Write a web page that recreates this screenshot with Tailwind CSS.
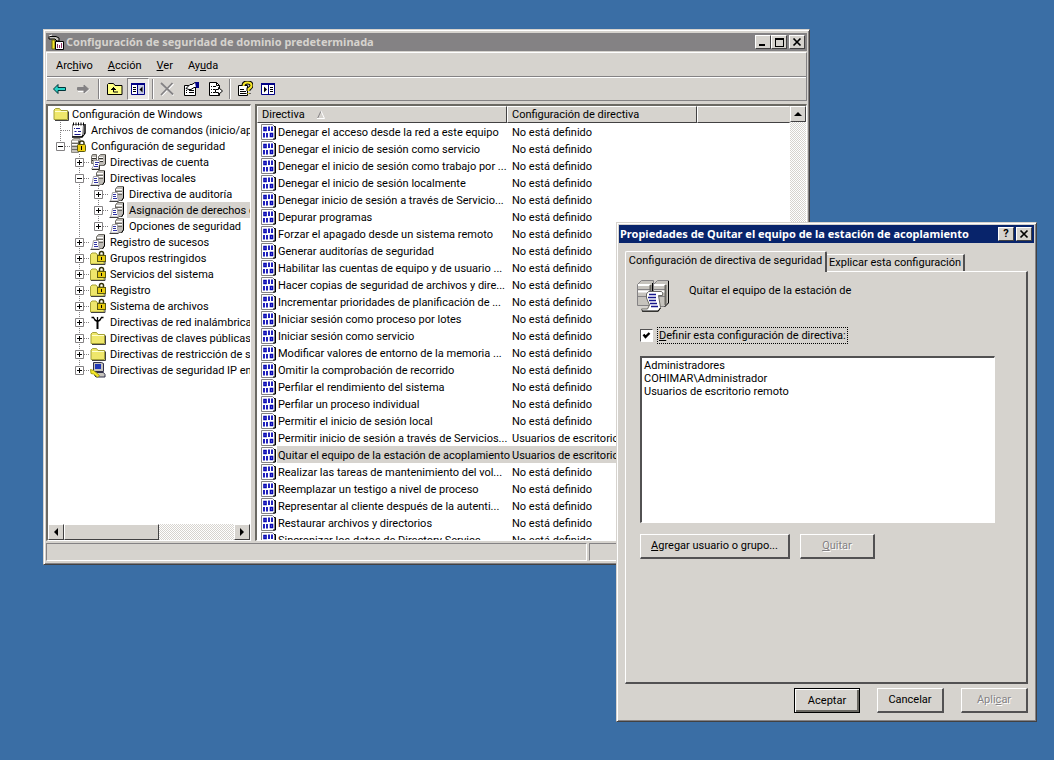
<!DOCTYPE html>
<html lang="es">
<head>
  <meta charset="UTF-8">
  <meta name="viewport" content="width=device-width, initial-scale=1.0">
  <title>Configuración de seguridad de dominio predeterminada</title>
  <script src="https://cdn.jsdelivr.net/npm/@tailwindcss/browser@4"></script>
</head>
<body class="relative min-h-screen overflow-hidden bg-[#3a6ea5] font-['Roboto','Liberation_Sans',sans-serif] text-[11px] leading-4 text-black">

  <!-- Icons -->
  <svg class="hidden">
    <symbol id="i-folder" viewBox="0 0 16 16">
      <path d="M1 13.500V4l1.500-1.500h4L8 4.500h6.500v9z" fill="#efe76b" stroke="#a5a239"/>
      <path d="M2 5.500h12" stroke="#ffffce"/><path d="M2 14.500h13.500V5.500" fill="none" stroke="#424142"/>
    </symbol>
    <symbol id="i-folderlock" viewBox="0 0 16 16">
      <path d="M.5 14V4.500L2 3h4l1.500 2H14v9z" fill="#efe76b" stroke="#a5a239"/>
      <path d="M1 14.500h14V8" fill="none" stroke="#424142"/>
      <path d="M9.500 6V3.500q0-2 2-2t2 2V6" fill="none" stroke="#31300a" stroke-width="1.500"/>
      <rect x="7.500" y="5.500" width="8" height="6" fill="#e7cb10" stroke="#5a5910"/><path d="M11.500 7v3" stroke="#000"/>
    </symbol>
    <symbol id="i-script" viewBox="0 0 16 16">
      <path d="M1.500 2.500h11l-1 12h-10z" fill="#fff" stroke="#848284"/>
      <path d="M14 2v9l-3 4H1" fill="none" stroke="#000" stroke-width="1.500"/><path d="M12.500 3v10" stroke="#848284"/>
      <path d="M2.500.500v3M5 .500v3M7.500.500v3M10 .500v3M12.500.500v3" stroke="#000"/>
      <path d="M5 6.500h4M3 6.500h1M3.500 9.500h2M7 9.500h3M3.500 12.500h6" stroke="#18188c"/>
    </symbol>
    <symbol id="i-serverlock" viewBox="0 0 16 16">
      <path d="M.5 2.500L3 .500h6v12L7 14.500H.500z" fill="#c6c3bd" stroke="#8c8a84"/>
      <path d="M1 5.500h6M1 8.500h6M1 11.500h6M7.500 2.500v12" stroke="#6b6963"/><path d="M1 3.500h6M1 6.500h6" stroke="#fff"/>
      <path d="M8.500 7V5q0-2 2.300-2T13 5v2" fill="none" stroke="#31300a" stroke-width="1.500"/>
      <rect x="6.500" y="6.500" width="8" height="7" rx="1" fill="#efcf10" stroke="#5a5910"/><path d="M10.500 8v4" stroke="#000"/>
    </symbol>
    <symbol id="i-servers" viewBox="0 0 16 16">
      <path d="M1.500 2.500l1-2h4v9h-5zM8.500 2.500l2-2h5v9l-2 2h-5z" fill="#bdbab5" stroke="#6b6963"/>
      <path d="M2 4.500h4M2 6.500h4M9 4.500h4M9 7.500h4M15.500 1v9l-2 2" fill="none" stroke="#31302c"/><path d="M2 3.500h4M9 3.500h4M9 6.500h4" stroke="#fff"/>
      <path d="M3.500 6.500h6v4l-1 4.500h-7l2-3z" fill="#fff" stroke="#a5a2a5"/><path d="M2 15.500h7.500V11" fill="none" stroke="#31302c"/>
      <path d="M5 8.500h4M5 10.500h3M4 12.500h4" stroke="#3134a5"/>
    </symbol>
    <symbol id="i-policy" viewBox="0 0 16 16">
      <path d="M6.500 3L8.500.500h6v11l-2 3h-6z" fill="#bdbab5" stroke="#6b6963"/>
      <path d="M7 5.500h6M7 8.500h6" stroke="#6b6963"/><path d="M7 3.500h6M7 6.500h6" stroke="#fff"/><path d="M14.500 1v11l-2 3" fill="none" stroke="#000"/>
      <path d="M3.500 6.500h5v4l1 4.500h-8l1-3z" fill="#fff" stroke="#a5a2a5"/><path d="M.5 15.500h9" stroke="#424142"/>
      <path d="M4 8.500h3M4 10.500h3M4 12.500h4" stroke="#3134a5"/>
    </symbol>
    <symbol id="i-antenna" viewBox="0 0 16 16">
      <path d="M7.500 6v9" stroke="#000" stroke-width="2"/>
      <path d="M1.500 3.500h2q1 3 4 4q3-1 4-4h2M7.500 3v5" fill="none" stroke="#000" stroke-width="1.300"/>
    </symbol>
    <symbol id="i-ipsec" viewBox="0 0 16 16">
      <path d="M3.500.500h8l2 1v8h-10z" fill="#c6c3bd" stroke="#31304a"/><rect x="5" y="2" width="6" height="5" fill="#2138b5"/>
      <path d="M4.500 13.500l2-3h7l1.500 2v2.500H6z" fill="#c6c3bd" stroke="#31304a"/>
      <path d="M.5 7.500l3 1 6 5-2 1.500-4-3-2.500-.5z" fill="#f7e729" stroke="#a5a210"/>
    </symbol>
    <symbol id="i-binary" viewBox="0 0 16 16">
      <path d="M.5.500h11l2 2v13h-13z" fill="#fff" stroke="#848284"/>
      <path d="M13 2.500h1.500V15H12" fill="none" stroke="#000"/>
      <path d="M3 3.500h2v3H3z" fill="none" stroke="#0808b5" stroke-width="1.600"/><path d="M8 2.500V7M11 2.500V7" stroke="#0808b5" stroke-width="1.800"/>
      <path d="M9.500 9.500h2v3h-2z" fill="none" stroke="#0808b5" stroke-width="1.600"/><path d="M3 9v4.500M6 9v4.500" stroke="#0808b5" stroke-width="1.800"/>
    </symbol>
    <symbol id="i-console" viewBox="0 0 16 16">
      <path d="M1 2.500h7l3 1.500v3H9L7 5H1z" fill="#c6c3bd" stroke="#000"/><path d="M1 2l3-1" stroke="#fff"/>
      <path d="M4 6h3v9H4z" fill="#f7e729" stroke="#6b6910"/>
      <path d="M7.500 7.500h8v8h-8z" fill="#fff" stroke="#000"/><path d="M9.500 14v-4M11.500 14v-3M13.500 14V9" stroke="#8c3063"/>
    </symbol>
    <symbol id="i-back" viewBox="0 0 16 16"><path d="M1.500 8L6 3.500v3h7.500v3H6v3z" fill="#29d3c6" stroke="#003439"/></symbol>
    <symbol id="i-fwd" viewBox="0 0 16 16"><path d="M3 10.500h6M10 12.500l4.500-4.500" stroke="#fff"/><path d="M13.500 8L9 4v2.500H2.500v2.500H9V12z" fill="#848284" stroke="#848284"/></symbol>
    <symbol id="i-up" viewBox="0 0 16 16">
      <path d="M.5 13.500v-10l1-1h5l1.500 2h7v9z" fill="#ffff84" stroke="#000"/>
      <path d="M6.500 6v5h4.500" fill="none" stroke="#000"/><path d="M4 8.500h5M5 7.500h3M6.500 6v1" stroke="#000"/>
    </symbol>
    <symbol id="i-pane" viewBox="0 0 16 16">
      <path d="M1.500 2.500h13v11h-13z" fill="#fff" stroke="#000084"/><path d="M1 3h14" stroke="#000084" stroke-width="2"/>
      <path d="M8 4h6v9H8z" fill="#c6cbe7"/><path d="M7.500 3v10" stroke="#000084"/><path d="M3 6.500h3M3 8.500h3M3 10.500h3" stroke="#000"/><path d="M12.500 5.500v6l-3-3z"/>
    </symbol>
    <symbol id="i-pane2" viewBox="0 0 16 16">
      <path d="M1.500 2.500h13v11h-13z" fill="#fff" stroke="#000084"/><path d="M1 3h14" stroke="#000084" stroke-width="2"/>
      <path d="M8.500 3v10" stroke="#000084"/><path d="M10 6.500h3M10 8.500h3M10 10.500h3" stroke="#000"/><path d="M4 5.500v6l3-3z"/>
    </symbol>
    <symbol id="i-delete" viewBox="0 0 16 16"><path d="M2.500 3l12 11.500M14.500 3L3 14.500" stroke="#fff" stroke-width="1.500"/><path d="M2 2l12 11.500M13.500 2L2 14" stroke="#848284" stroke-width="1.800"/></symbol>
    <symbol id="i-props" viewBox="0 0 16 16">
      <path d="M1.500 4.500h11v10h-11z" fill="#fff" stroke="#000"/><path d="M3 9.500h1M6 9.500h5M3 11.500h1M6 11.500h5" stroke="#000"/>
      <path d="M3 7.500l4-4h2l3-2h2v5h-3L8 8.500H6z" fill="#fff" stroke="#000"/><path d="M12 1h4v6h-3z" fill="#000084"/>
    </symbol>
    <symbol id="i-export" viewBox="0 0 16 16">
      <path d="M2.500 1.500h7l3 3v10h-10z" fill="#fff" stroke="#000"/><path d="M9.500 1.500v3h3" fill="none" stroke="#000"/>
      <path d="M4 5.500h1M6 5.500h3M4 8.500h1M6 8.500h2M4 11.500h1M6 11.500h2" stroke="#000"/>
      <path d="M8.500 8.500h3v-2l4 3.500-4 3.500v-2h-3z" fill="#fff" stroke="#000"/>
    </symbol>
    <symbol id="i-help" viewBox="0 0 16 16">
      <path d="M1.500 4.500h9v10h-9z" fill="#fff" stroke="#000"/><path d="M3 8.500h4M3 10.500h6M3 12.500h6" stroke="#000"/>
      <path d="M6.500 5q0-3.500 4-3.500t4 3q0 2-3 3.500v2M11.500 12v1" fill="none" stroke="#000" stroke-width="4"/>
      <path d="M6.500 5q0-3.500 4-3.500t4 3q0 2-3 3.500v2M11.500 12v1" fill="none" stroke="#f7e729" stroke-width="2"/>
    </symbol>
    <symbol id="i-arrow-l" viewBox="0 0 8 8"><path d="M6 0v8L2 4z"/></symbol>
    <symbol id="i-arrow-r" viewBox="0 0 8 8"><path d="M2 0v8l4-4z"/></symbol>
    <symbol id="i-arrow-u" viewBox="0 0 8 8"><path d="M0 6h8L4 2z"/></symbol>
    <symbol id="i-close" viewBox="0 0 10 10"><path d="M1.500 1.500l7 7M8.500 1.500l-7 7" stroke="#000" stroke-width="1.700"/></symbol>
    <symbol id="i-bigpolicy" viewBox="0 0 32 32">
      <path d="M.5 4.500l4-4h12v21l-3 4H.500z" fill="#c6c3bd" stroke="#848284"/>
      <path d="M16.500 4.500l4-4h11v22l-4 4h-11z" fill="#c6c3bd" stroke="#848284"/>
      <path d="M1 5h12M17 5h11M1 11.500h12M17 11.500h11" stroke="#fff" stroke-width="2"/>
      <path d="M1 9.500h12M17 9.500h11M1 16.500h10M22 16.500h6" stroke="#848284"/>
      <path d="M15.500 3v10M31.500 1v22l-4 4" fill="none" stroke="#000"/><path d="M28.500 5v20M13.500 5v7" stroke="#6b6963" stroke-width="2"/>
      <path d="M11.500 11.500h13q2 1 1 4h-4l2 12-2 4H5.500l-1-2.500h6l2-4-3-7q-1-5 2-6.500z" fill="#fff" stroke="#6b6963"/>
      <path d="M12 14.500h7M11 17.500h8M12 20.500h7M13 23.500h7M14 26.500h7" stroke="#18188c" stroke-width="1.500"/>
      <path d="M5 31h16l2.500-3" fill="none" stroke="#000"/>
    </symbol>
  </svg>

  <!-- MMC console window -->
  <main class="absolute left-[43px] top-[29px] flex h-[536px] w-[767px] flex-col border border-[#d6d3ce] border-r-[#424142] border-b-[#424142] bg-[#d6d3ce] px-[2px] py-[3px] shadow-[inset_1px_1px_0_#fff,inset_-1px_-1px_0_#848284]">
    <header class="flex h-[18px] shrink-0 items-center gap-[2px] bg-[#848284] px-[2px]">
      <svg class="size-4"><use href="#i-console"/></svg>
      <h1 class="flex-1 truncate font-['Noto_Sans',sans-serif] font-bold text-[#d6d3ce]">Configuración de seguridad de dominio predeterminada</h1>
      <div class="flex">
        <button aria-label="Minimizar" class="flex h-[14px] w-4 items-end justify-start border border-white border-r-[#424142] border-b-[#424142] bg-[#d6d3ce] px-[3px] pb-[2px]"><span class="h-[2px] w-[6px] bg-black"></span></button>
        <button aria-label="Maximizar" class="flex h-[14px] w-4 items-center justify-center border border-white border-r-[#424142] border-b-[#424142] bg-[#d6d3ce]"><span class="h-[9px] w-[9px] border border-t-2 border-black"></span></button>
        <button aria-label="Cerrar" class="ml-[2px] flex h-[14px] w-4 items-center justify-center border border-white border-r-[#424142] border-b-[#424142] bg-[#d6d3ce]"><svg class="size-[10px]"><use href="#i-close"/></svg></button>
      </div>
    </header>

    <div class="mt-px shrink-0 border border-[#848284] border-t-white border-l-white">
      <nav class="flex h-6 items-center gap-[15px] border-b border-[#848284] pt-[2px] pl-[9px]">
        <a href="#">Arc<u>h</u>ivo</a>
        <a href="#"><u>A</u>cción</a>
        <a href="#"><u>V</u>er</a>
        <a href="#">Ay<u>u</u>da</a>
      </nav>
      <div class="flex h-[23px] items-center border-t border-white pl-[5px]">
        <button aria-label="Atrás" class="mr-[7px]"><svg class="size-4"><use href="#i-back"/></svg></button>
        <button aria-label="Adelante" class="mr-[7px]"><svg class="size-4"><use href="#i-fwd"/></svg></button>
        <span class="mr-[7px] h-5 w-[2px] border-l border-[#848284] bg-white"></span>
        <button aria-label="Subir un nivel" class="mr-1"><svg class="size-4"><use href="#i-up"/></svg></button>
        <button aria-label="Mostrar árbol" class="mr-[3px] flex size-[22px] items-center justify-center border border-[#848284] border-r-white border-b-white bg-[#ebe9e6]"><svg class="size-4"><use href="#i-pane"/></svg></button>
        <span class="mr-[5px] h-5 w-[2px] border-l border-[#848284] bg-white"></span>
        <button aria-label="Eliminar" class="mr-2"><svg class="size-4"><use href="#i-delete"/></svg></button>
        <button aria-label="Propiedades" class="mr-2"><svg class="size-4"><use href="#i-props"/></svg></button>
        <button aria-label="Exportar lista" class="mr-[6px]"><svg class="size-4"><use href="#i-export"/></svg></button>
        <span class="mr-[6px] h-5 w-[2px] border-l border-[#848284] bg-white"></span>
        <button aria-label="Ayuda" class="mr-[7px]"><svg class="size-4"><use href="#i-help"/></svg></button>
        <button aria-label="Panel de acciones"><svg class="size-4"><use href="#i-pane2"/></svg></button>
      </div>
    </div>

    <div class="mt-[3px] flex min-h-0 flex-1">
      <!-- Console tree -->
      <section class="flex w-[205px] shrink-0 flex-col border-t-2 border-r border-b border-l-2 border-[#6b6963] border-r-white border-b-white bg-white">
        <ul id="tree" class="min-h-0 flex-1 overflow-hidden"></ul>
        <div class="flex h-4 bg-[repeating-conic-gradient(#fff_0_25%,#d6d3ce_0_50%)] bg-[length:2px_2px]">
          <button aria-label="Izquierda" class="flex w-4 items-center justify-center border border-white border-r-[#424142] border-b-[#424142] bg-[#d6d3ce]"><svg class="size-2"><use href="#i-arrow-l"/></svg></button>
          <span class="w-[95px] border border-white border-r-[#424142] border-b-[#424142] bg-[#d6d3ce]"></span>
          <button aria-label="Derecha" class="ml-auto flex w-4 items-center justify-center border border-white border-r-[#424142] border-b-[#424142] bg-[#d6d3ce]"><svg class="size-2"><use href="#i-arrow-r"/></svg></button>
        </div>
      </section>

      <!-- Policy list -->
      <section class="ml-1 flex min-w-0 flex-1 border-t-2 border-r border-b border-l-2 border-[#6b6963] border-r-white border-b-white bg-white">
        <div class="min-w-0 flex-1 overflow-hidden">
          <table class="w-full table-fixed border-separate border-spacing-0">
            <colgroup><col class="w-[250px]"><col class="w-[190px]"><col></colgroup>
            <thead class="text-left">
              <tr class="h-[17px]">
                <th class="border border-white border-r-[#424142] border-b-[#424142] bg-[#d6d3ce] p-0 pl-1 font-normal leading-[15px]">
                  <span class="flex items-center gap-3">Directiva <svg class="size-2" viewBox="0 0 8 8"><path d="M.5 7.500L4 0" stroke="#848284"/><path d="M4 0l3.500 7.500H0" fill="none" stroke="#fff"/></svg></span>
                </th>
                <th class="border border-white border-r-[#424142] border-b-[#424142] bg-[#d6d3ce] p-0 pl-1 font-normal leading-[15px]">Configuración de directiva</th>
                <th class="border border-white border-r-[#d6d3ce] border-b-[#424142] bg-[#d6d3ce] p-0 leading-[15px]"></th>
              </tr>
            </thead>
            <tbody id="policies"></tbody>
          </table>
        </div>
        <div class="w-4 bg-[repeating-conic-gradient(#fff_0_25%,#d6d3ce_0_50%)] bg-[length:2px_2px]">
          <button aria-label="Arriba" class="flex h-4 w-4 items-center justify-center border border-white border-r-[#424142] border-b-[#424142] bg-[#d6d3ce]"><svg class="size-2"><use href="#i-arrow-u"/></svg></button>
        </div>
      </section>
    </div>

    <footer class="mt-[2px] flex h-[18px] shrink-0 gap-[2px]">
      <div class="w-[541px] border border-[#848284] border-r-white border-b-white"></div>
      <div class="flex-1 border border-[#848284] border-r-white border-b-white"></div>
    </footer>
  </main>

  <!-- Properties dialog -->
  <div role="dialog" class="absolute left-[616px] top-[222px] flex w-[421px] flex-col border border-[#d6d3ce] border-r-[#424142] border-b-[#424142] bg-[#d6d3ce] p-[2px] shadow-[inset_1px_1px_0_#fff,inset_-1px_-1px_0_#848284]">
    <header class="flex h-[18px] items-center gap-[2px] bg-[#08246b] pr-[2px] pl-px">
      <h2 class="flex-1 truncate font-['Noto_Sans',sans-serif] font-bold text-white">Propiedades de Quitar el equipo de la estación de acoplamiento</h2>
      <button aria-label="Ayuda" class="flex h-[14px] w-4 items-center justify-center border border-white border-r-[#424142] border-b-[#424142] bg-[#d6d3ce] font-bold leading-3">?</button>
      <button aria-label="Cerrar" class="flex h-[14px] w-4 items-center justify-center border border-white border-r-[#424142] border-b-[#424142] bg-[#d6d3ce]"><svg class="size-[10px]"><use href="#i-close"/></svg></button>
    </header>

    <div class="px-[6px] pt-2">
      <div role="tablist" class="flex items-end">
        <button role="tab" aria-selected="true" class="relative -mb-px h-[21px] w-[202px] rounded-t-[2px] border-t border-r-2 border-l border-white border-r-[#525152] bg-[#d6d3ce] pb-[2px] text-center leading-4">Configuración de directiva de seguridad</button>
        <button role="tab" class="h-[17px] w-[138px] border-t border-r-2 border-white border-r-[#525152] text-center leading-4">Explicar esta configuración</button>
      </div>
      <div class="h-[413px] border border-r-2 border-b-2 border-white border-r-[#525152] border-b-[#525152] px-[11px] pt-2">
        <div class="flex gap-5">
          <svg class="size-8"><use href="#i-bigpolicy"/></svg>
          <p class="pt-[3px]">Quitar el equipo de la estación de</p>
        </div>
        <div class="mt-[15px] ml-[3px] flex items-center gap-1">
          <span class="relative flex">
            <input id="definir" type="checkbox" checked class="peer size-[13px] appearance-none border border-[#525152] border-r-white border-b-white bg-white">
            <svg class="pointer-events-none absolute inset-0 hidden size-[13px] peer-checked:block" viewBox="0 0 13 13"><path d="M3.500 5.500l2 2.500 4-4" fill="none" stroke="#000" stroke-width="2.400"/></svg>
          </span>
          <label for="definir" class="border border-dotted border-black px-px leading-[15px]"><u>D</u>efinir esta configuración de directiva:</label>
        </div>
        <select multiple aria-label="Usuarios y grupos" class="mt-3 ml-[3px] block h-[167px] w-[355px] appearance-none overflow-hidden border-t-2 border-r border-b border-l-2 border-[#525152] border-r-white border-b-white bg-white py-px">
          <option class="h-[13px] min-h-0 px-[2px] py-0 leading-[13px]">Administradores</option>
          <option class="h-[13px] min-h-0 px-[2px] py-0 leading-[13px]">COHIMAR\Administrador</option>
          <option class="h-[13px] min-h-0 px-[2px] py-0 leading-[13px]">Usuarios de escritorio remoto</option>
        </select>
        <div class="mt-[11px] ml-[3px] flex gap-[10px]">
          <button class="h-[25px] w-[150px] border border-r-2 border-b-2 border-white border-r-[#525152] border-b-[#525152]"><u>A</u>gregar usuario o grupo...</button>
          <button disabled class="h-[25px] w-[75px] border border-r-2 border-b-2 border-white border-r-[#525152] border-b-[#525152] text-[#848284] text-shadow-[1px_1px_0_#fff]"><u>Q</u>uitar</button>
        </div>
      </div>
      <div class="flex justify-end gap-[17px] pt-1 pb-[6px]">
        <button class="h-[25px] w-[66px] border border-black shadow-[inset_1px_1px_0_#fff,inset_-2px_-2px_0_#6b6963]">Aceptar</button>
        <button class="h-[25px] w-[67px] border border-r-2 border-b-2 border-white border-r-[#525152] border-b-[#525152]">Cancelar</button>
        <button disabled class="h-[25px] w-[67px] border border-r-2 border-b-2 border-white border-r-[#525152] border-b-[#525152] text-[#848284] text-shadow-[1px_1px_0_#fff]">Apli<u>c</u>ar</button>
      </div>
    </div>
  </div>

  <script>
    // level, state (+, -, or none), icon, label
    const nodes = [
      [1, '', 'i-script', 'Archivos de comandos (inicio/apagado)'],
      [1, '-', 'i-serverlock', 'Configuración de seguridad'],
      [2, '+', 'i-servers', 'Directivas de cuenta'],
      [2, '-', 'i-policy', 'Directivas locales'],
      [3, '+', 'i-policy', 'Directiva de auditoría'],
      [3, '+', 'i-policy', 'Asignación de derechos de usuario'],
      [3, '+', 'i-policy', 'Opciones de seguridad'],
      [2, '+', 'i-policy', 'Registro de sucesos'],
      [2, '+', 'i-folderlock', 'Grupos restringidos'],
      [2, '+', 'i-folderlock', 'Servicios del sistema'],
      [2, '+', 'i-folderlock', 'Registro'],
      [2, '+', 'i-folderlock', 'Sistema de archivos'],
      [2, '+', 'i-antenna', 'Directivas de red inalámbrica (IEEE 802.11)'],
      [2, '+', 'i-folder', 'Directivas de claves públicas'],
      [2, '+', 'i-folder', 'Directivas de restricción de software'],
      [2, '+', 'i-ipsec', 'Directivas de seguridad IP en Active Directory']
    ];

    // is there another node at this level further down the same branch
    function hasNext(index, level) {
      for (let i = index + 1; i < nodes.length; i++) {
        if (nodes[i][0] < level) return false;
        if (nodes[i][0] === level) return true;
      }
      return false;
    }

    const dots = 'stroke="#848284" stroke-dasharray="1 1"';
    let html = `<li class="flex h-4 items-center pl-[5px] whitespace-nowrap"><svg class="size-4 shrink-0"><use href="#i-folder"/></svg><span class="ml-px px-[2px] pt-[2px] leading-[14px]">Configuración de Windows</span></li>`;
    nodes.forEach(([level, state, icon, label], i) => {
      html += `<li class="flex h-4 items-center pl-2 whitespace-nowrap">`;
      for (let l = 1; l < level; l++) {
        html += `<svg class="h-4 w-[19px] shrink-0">${hasNext(i, l) ? `<path d="M4.5 0v16" ${dots}/>` : ''}</svg>`;
      }
      html += `<svg class="h-4 w-[15px] shrink-0" fill="none"><path d="M4.5 0v${hasNext(i, level) ? 16 : 8}M5 8.5h10" ${dots}/>`;
      if (state) html += `<path d="M.5 4.5h8v8h-8z" fill="#fff" stroke="#848284"/><path d="M2 8.5h5${state === '+' ? 'M4.5 6v5' : ''}" stroke="#000"/>`;
      const selected = label.startsWith('Asignación') ? 'bg-[#d6d3ce]' : '';
      html += `</svg><svg class="size-4 shrink-0"><use href="#${icon}"/></svg><span class="ml-[2px] px-[2px] pt-[2px] leading-[14px] ${selected}">${label}</span></li>`;
    });
    document.getElementById('tree').innerHTML = html;

    const undefinedText = 'No está definido';
    const policies = [
      ['Denegar el acceso desde la red a este equipo', undefinedText],
      ['Denegar el inicio de sesión como servicio', undefinedText],
      ['Denegar el inicio de sesión como trabajo por ...', undefinedText],
      ['Denegar el inicio de sesión localmente', undefinedText],
      ['Denegar inicio de sesión a través de Servicio...', undefinedText],
      ['Depurar programas', undefinedText],
      ['Forzar el apagado desde un sistema remoto', undefinedText],
      ['Generar auditorías de seguridad', undefinedText],
      ['Habilitar las cuentas de equipo y de usuario ...', undefinedText],
      ['Hacer copias de seguridad de archivos y dire...', undefinedText],
      ['Incrementar prioridades de planificación de ...', undefinedText],
      ['Iniciar sesión como proceso por lotes', undefinedText],
      ['Iniciar sesión como servicio', undefinedText],
      ['Modificar valores de entorno de la memoria ...', undefinedText],
      ['Omitir la comprobación de recorrido', undefinedText],
      ['Perfilar el rendimiento del sistema', undefinedText],
      ['Perfilar un proceso individual', undefinedText],
      ['Permitir el inicio de sesión local', undefinedText],
      ['Permitir inicio de sesión a través de Servicios...', 'Usuarios de escritorio remoto'],
      ['Quitar el equipo de la estación de acoplamiento', 'Usuarios de escritorio remoto', true],
      ['Realizar las tareas de mantenimiento del vol...', undefinedText],
      ['Reemplazar un testigo a nivel de proceso', undefinedText],
      ['Representar al cliente después de la autenti...', undefinedText],
      ['Restaurar archivos y directorios', undefinedText],
      ['Sincronizar los datos de Directory Service', undefinedText]
    ];
    document.getElementById('policies').innerHTML = policies.map(([name, value, selected]) => `
      <tr class="h-[17px] whitespace-nowrap">
        <td class="p-0"><div class="flex h-[17px] items-center pl-1"><svg class="size-4 shrink-0"><use href="#i-binary"/></svg><span class="min-w-0 flex-1 pt-[2px] pl-px leading-[15px] ${selected ? 'bg-[#d6d3ce]' : ''}">${name}</span></div></td>
        <td class="p-0 pt-[2px] pl-[5px] leading-[15px] ${selected ? 'bg-[#d6d3ce]' : ''}">${value}</td>
        <td class="p-0 ${selected ? 'bg-[#d6d3ce]' : ''}"></td>
      </tr>`).join('');
  </script>
</body>
</html>
